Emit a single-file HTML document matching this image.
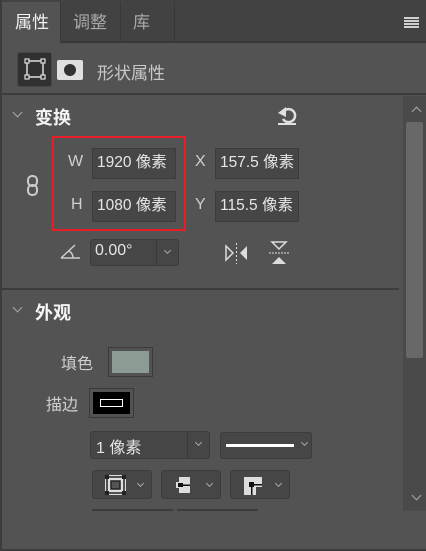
<!DOCTYPE html>
<html><head><meta charset="utf-8"><style>
*{margin:0;padding:0;box-sizing:border-box}
body{width:426px;height:551px;background:#535353;position:relative;overflow:hidden;font-family:"Liberation Sans","Noto Sans CJK SC",sans-serif;color:#d6d6d6}
.a{position:absolute}
.inp{position:absolute;background:#464646;border:1px solid #3c3c3c;color:#e6e6e6;font-size:15.5px;line-height:28px;padding-left:4px;white-space:nowrap}
.lbl{position:absolute;font-size:16px;color:#cfcfcf}
.chev{position:absolute;width:7px;height:7px;border-right:1px solid #aaa;border-bottom:1px solid #aaa;transform:rotate(45deg)}
.dd{position:absolute;background:#464646;border:1px solid #3c3c3c;border-radius:3px}
</style></head><body>
<div class="a" style="left:0;top:0;width:426px;height:43px;background:#424242"></div>
<div class="a" style="left:2px;top:2px;width:58px;height:41px;background:#535353"></div>
<div class="a" style="left:120px;top:2px;width:1px;height:40px;background:#383838"></div>
<div class="a" style="left:174px;top:2px;width:1px;height:40px;background:#383838"></div>
<div class="a" style="left:60px;top:2px;width:1px;height:41px;background:#383838"></div>
<div class="a" style="left:0;top:41px;width:426px;height:2px;background:#383838"></div>
<div class="a" style="left:2px;top:41px;width:58px;height:2px;background:#535353"></div>
<div class="a" style="left:15px;top:8px;font-size:17px;color:#f0f0f0">属性</div>
<div class="a" style="left:73px;top:8px;font-size:17px;color:#a8a8a8">调整</div>
<div class="a" style="left:133px;top:8px;font-size:17px;color:#a8a8a8">库</div>
<div class="a" style="left:404px;top:17px;width:15px;height:11px;background:repeating-linear-gradient(#d0d0d0 0 2px,transparent 2px 3px)"></div>
<div class="a" style="left:17px;top:52px;width:35px;height:35px;background:#303030;border:1px solid #474747;border-radius:3px"></div>
<svg class="a" style="left:24px;top:58px" width="22" height="22"><rect x="3" y="3" width="16" height="16" fill="none" stroke="#ddd" stroke-width="1.5"/><g fill="#303030" stroke="#ddd" stroke-width="1.2"><rect x="1" y="1" width="4" height="4"/><rect x="17" y="1" width="4" height="4"/><rect x="1" y="17" width="4" height="4"/><rect x="17" y="17" width="4" height="4"/></g></svg>
<div class="a" style="left:57px;top:60px;width:26px;height:20px;background:#e0e0e0;border-radius:2px"></div>
<div class="a" style="left:64px;top:64px;width:12px;height:12px;background:#333;border-radius:50%"></div>
<div class="a" style="left:97px;top:59px;font-size:17px;color:#c8c8c8">形状属性</div>
<div class="a" style="left:0;top:93px;width:426px;height:2px;background:#3c3c3c"></div>
<div class="a" style="left:0;top:0;width:2px;height:551px;background:#3c3c3c"></div>
<div class="a" style="left:403px;top:96px;width:23px;height:415px;background:#4a4a4a"></div>
<div class="a" style="left:406px;top:122px;width:17px;height:236px;background:#686868;border-radius:2px"></div>
<div class="chev" style="left:413px;top:108px;transform:rotate(225deg)"></div>
<div class="chev" style="left:413px;top:492px"></div>
<div class="chev" style="left:14px;top:109px"></div>
<div class="a" style="left:35px;top:104px;font-size:18px;font-weight:bold;color:#f4f4f4">变换</div>
<svg class="a" style="left:276px;top:104px" width="22" height="22"><path d="M8 7 A6.5 6.5 0 1 1 7 15" fill="none" stroke="#e0e0e0" stroke-width="2.5"/><path d="M2 9 L10 3 L10 13Z" fill="#e0e0e0"/><rect x="2" y="19" width="18" height="2" fill="#e0e0e0"/></svg>
<div class="a" style="left:52px;top:136px;width:134px;height:95px;border:2px solid #e81d25"></div>
<div class="lbl" style="left:68px;top:153px">W</div>
<div class="inp" style="left:92px;top:148px;width:84px;height:31px">1920 像素</div>
<div class="lbl" style="left:195px;top:153px">X</div>
<div class="inp" style="left:215px;top:148px;width:84px;height:31px">157.5 像素</div>
<div class="lbl" style="left:71px;top:196px">H</div>
<div class="inp" style="left:92px;top:191px;width:84px;height:31px">1080 像素</div>
<div class="lbl" style="left:195px;top:196px">Y</div>
<div class="inp" style="left:215px;top:191px;width:84px;height:31px">115.5 像素</div>
<svg class="a" style="left:26px;top:174px" width="14" height="24"><rect x="2" y="2" width="9" height="10" rx="4" fill="none" stroke="#ccc" stroke-width="2"/><rect x="2" y="11" width="9" height="10" rx="4" fill="none" stroke="#ccc" stroke-width="2"/></svg>
<svg class="a" style="left:60px;top:243px" width="22" height="17"><path d="M1 15 L20 15 M1 15 L15 2 M13 15 A8 8 0 0 0 9 8" fill="none" stroke="#ccc" stroke-width="1.5"/></svg>
<div class="dd" style="left:90px;top:239px;width:89px;height:27px"></div>
<div class="a" style="left:156px;top:240px;width:1px;height:26px;background:#3a3a3a"></div>
<div class="a" style="left:95px;top:242px;font-size:16px;color:#e6e6e6">0.00°</div>
<div class="chev" style="left:165px;top:248px;width:5px;height:5px"></div>
<svg class="a" style="left:224px;top:241px" width="26" height="24"><path d="M2 5 L9 12 L2 19Z" fill="none" stroke="#ddd" stroke-width="1.5"/><path d="M23 5 L16 12 L23 19Z" fill="#ddd"/><path d="M12.5 2 V23" stroke="#ddd" stroke-dasharray="2 2"/></svg>
<svg class="a" style="left:268px;top:240px" width="22" height="26"><path d="M4 2 L18 2 L11 9Z" fill="none" stroke="#ddd" stroke-width="1.5"/><path d="M4 24 L18 24 L11 17Z" fill="#ddd"/><path d="M1 13 H21" stroke="#ddd" stroke-dasharray="2 1"/></svg>
<div class="a" style="left:0;top:288px;width:399px;height:2px;background:#3c3c3c"></div>
<div class="chev" style="left:14px;top:304px"></div>
<div class="a" style="left:35px;top:299px;font-size:18px;font-weight:bold;color:#f4f4f4">外观</div>
<div class="a" style="left:61px;top:350px;font-size:16px;color:#cfcfcf">填色</div>
<div class="a" style="left:108px;top:347px;width:45px;height:30px;border:1px solid #3a3a3a;background:#535353"></div>
<div class="a" style="left:112px;top:351px;width:37px;height:22px;background:#8c9b94"></div>
<div class="a" style="left:46px;top:391px;font-size:16px;color:#cfcfcf">描边</div>
<div class="a" style="left:89px;top:388px;width:45px;height:30px;border:1px solid #3a3a3a"></div>
<div class="a" style="left:93px;top:392px;width:37px;height:22px;background:#000"></div>
<div class="a" style="left:100px;top:399px;width:23px;height:8px;border:1px solid #fff"></div>
<div class="dd" style="left:90px;top:431px;width:120px;height:28px"></div>
<div class="a" style="left:187px;top:432px;width:1px;height:27px;background:#3a3a3a"></div>
<div class="a" style="left:96px;top:434px;font-size:16px;color:#e6e6e6">1 像素</div>
<div class="chev" style="left:196px;top:440px;width:5px;height:5px"></div>
<div class="dd" style="left:220px;top:432px;width:92px;height:27px"></div>
<div class="a" style="left:226px;top:444px;width:68px;height:3px;background:#fff"></div>
<div class="chev" style="left:302px;top:440px;width:5px;height:5px"></div>
<div class="dd" style="left:92px;top:470px;width:60px;height:29px"></div>
<svg class="a" style="left:104px;top:474px" width="23" height="22"><rect x="1" y="1" width="21" height="20" fill="#ddd"/><rect x="3" y="3" width="17" height="16" fill="none" stroke="#222" stroke-width="1.5"/><rect x="7" y="7" width="9" height="8" fill="#555" stroke="#222" stroke-width="1.5"/><g fill="#222"><rect x="1" y="1" width="4" height="4"/><rect x="18" y="1" width="4" height="4"/><rect x="1" y="17" width="4" height="4"/><rect x="18" y="17" width="4" height="4"/></g></svg>
<div class="chev" style="left:138px;top:481px;width:5px;height:5px"></div>
<div class="dd" style="left:161px;top:470px;width:60px;height:29px"></div>
<svg class="a" style="left:175px;top:476px" width="16" height="18"><path d="M4 1 H15 V17 H4 V12 H1 V6 H4Z" fill="#ddd"/><rect x="3" y="7" width="5" height="4" fill="#111"/><rect x="8" y="8.5" width="7" height="1.5" fill="#111"/></svg>
<div class="chev" style="left:207px;top:481px;width:5px;height:5px"></div>
<div class="dd" style="left:230px;top:470px;width:60px;height:29px"></div>
<svg class="a" style="left:243px;top:476px" width="20" height="19"><path d="M1 1 H19 V11 H13 V19 H1Z" fill="#ddd"/><rect x="6" y="6" width="5" height="5" fill="#111"/><rect x="11" y="8" width="8" height="1.5" fill="#111"/><rect x="8" y="11" width="1.5" height="8" fill="#111"/></svg>
<div class="chev" style="left:276px;top:481px;width:5px;height:5px"></div>
<div class="a" style="left:92px;top:509px;width:81px;height:2px;background:#3c3c3c"></div>
<div class="a" style="left:177px;top:509px;width:81px;height:2px;background:#3c3c3c"></div>
<div class="a" style="left:0;top:549px;width:426px;height:2px;background:#3c3c3c"></div>
</body></html>
